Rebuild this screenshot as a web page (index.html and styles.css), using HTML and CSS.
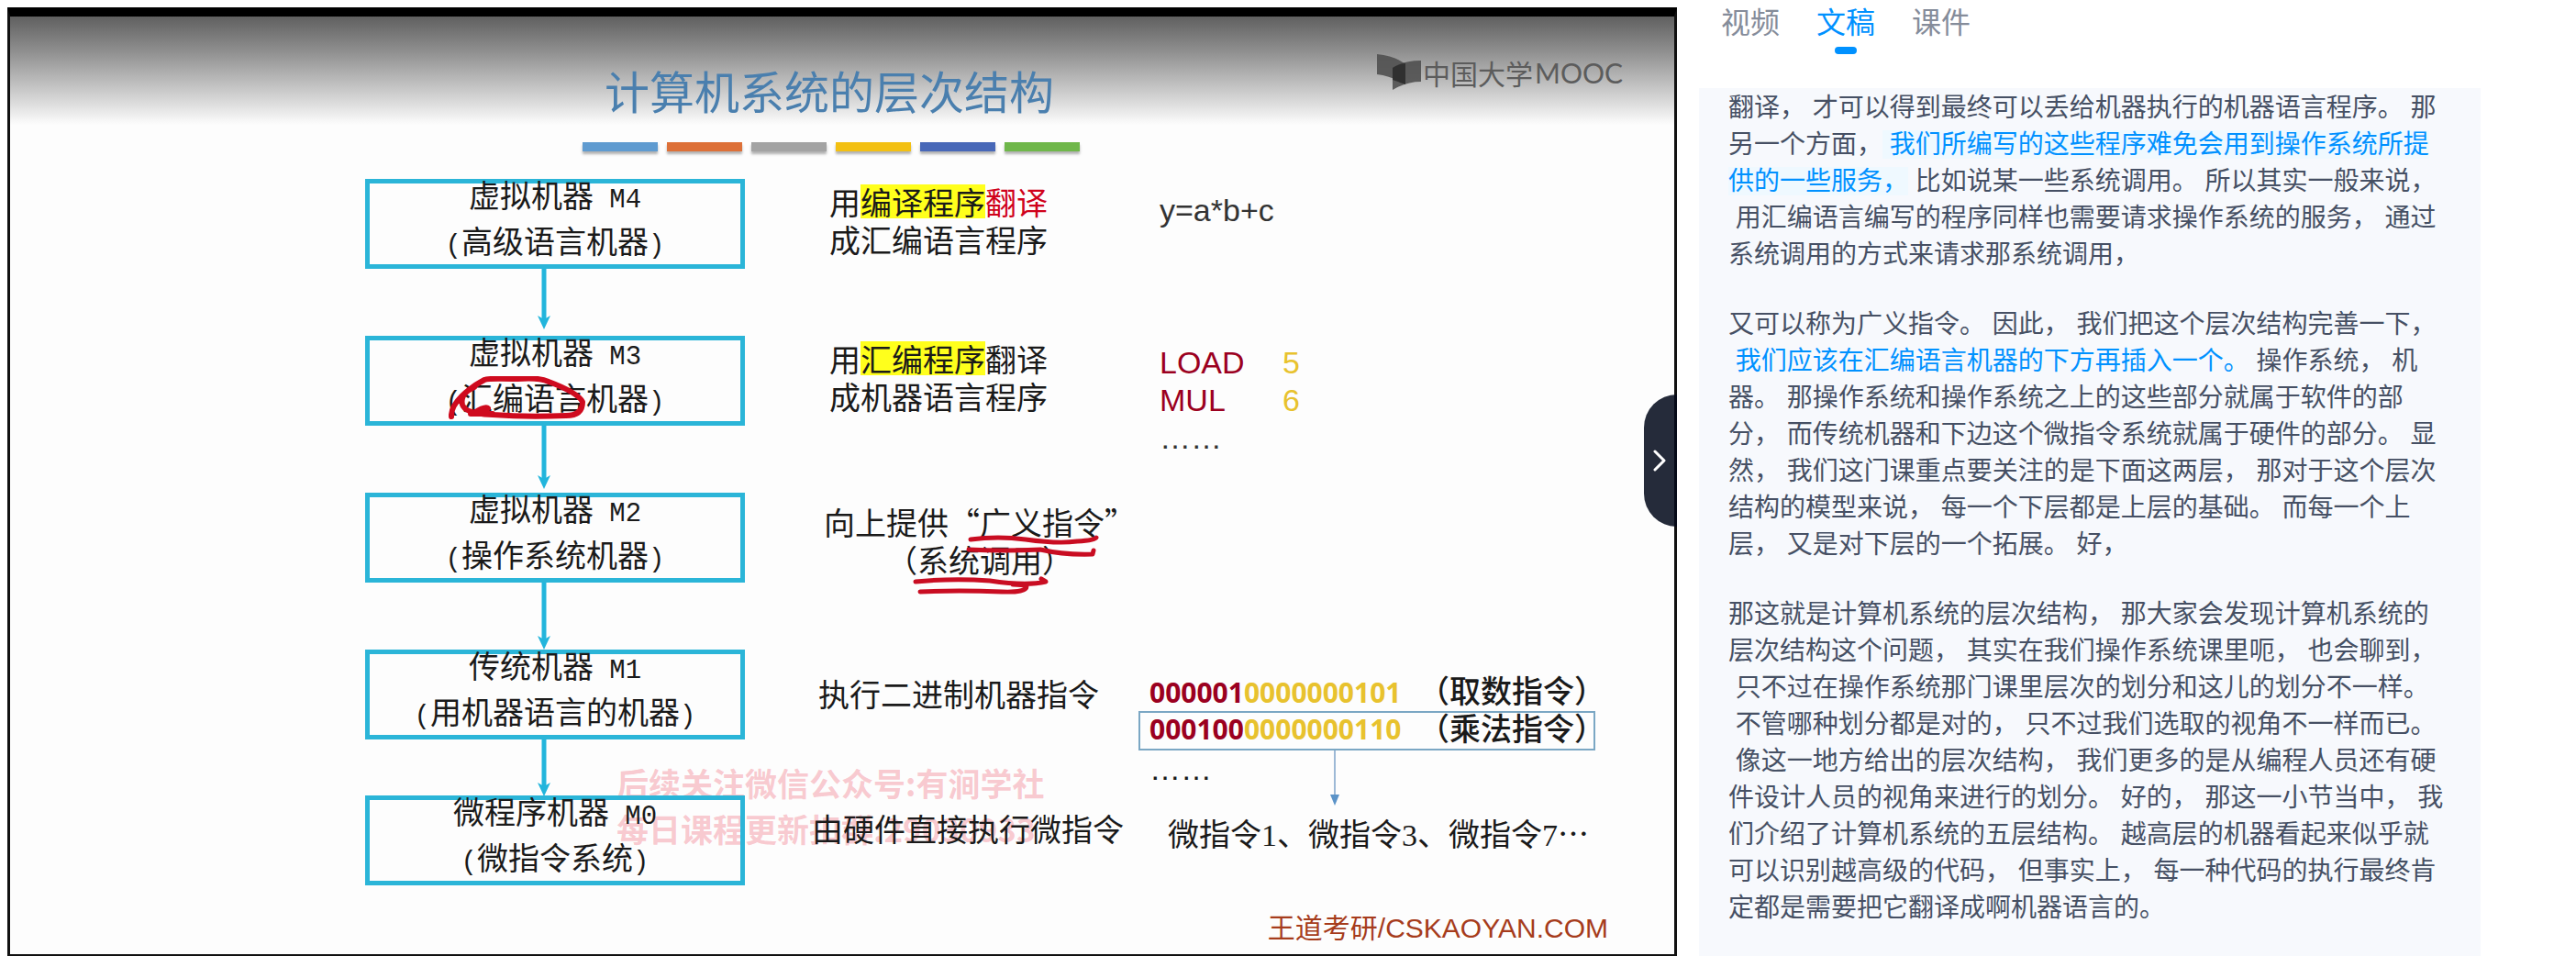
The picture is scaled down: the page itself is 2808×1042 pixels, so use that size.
FILE: index.html
```html
<!DOCTYPE html>
<html lang="zh-CN">
<head>
<meta charset="utf-8">
<title>计算机系统的层次结构</title>
<link rel="stylesheet" href="styles.css">
</head>
<body>
<div class="page">
  <main class="player">
    <div class="slide">
      <header class="slide-head">
        <h1 class="slide-title">计算机系统的层次结构</h1>
        <div class="brand">
          <svg class="brand-icon" viewBox="0 0 48 40" aria-hidden="true">
            <path d="M0 0Q20 2 31 11V33Q16 24 0 22Z" fill="#505050" opacity=".9"/>
            <path d="M17 39V15Q28 7 48 7V30Q32 30 17 39Z" fill="#4a4a4a" opacity=".85"/>
            <path d="M17 15Q24 10 31 10V33L17 28Z" fill="#303030"/>
          </svg>
          <span class="brand-name">中国大学</span><span class="brand-mooc">MOOC</span>
        </div>
        <div class="bars">
          <i class="bar blue"></i><i class="bar orange"></i><i class="bar gray"></i><i class="bar yellow"></i><i class="bar indigo"></i><i class="bar green"></i>
        </div>
      </header>

      <section class="levels">
        <div class="level">
          <div class="stack">
            <div class="box"><div class="label">虚拟机器<span class="mono"> M4</span><br><span class="mono">(</span>高级语言机器<span class="mono">)</span></div></div>
            <svg class="arrow" width="16" height="66" viewBox="0 0 16 66"><path d="M8 0V56" stroke="#22b5dc" stroke-width="5"/><path d="M1 51L8 55L15 51L8 66Z" fill="#22b5dc"/></svg>
          </div>
          <p class="note inset">用<mark>编译程序</mark><span class="red">翻译</span><br>成汇编语言程序</p>
          <p class="code single">y=a*b+c</p>
        </div>

        <div class="level">
          <div class="stack">
            <div class="box"><div class="label">虚拟机器<span class="mono"> M3</span><br><span class="mono">(</span>汇编语言机器<span class="mono">)</span></div>
              <svg class="ring" viewBox="0 0 150 50" aria-hidden="true"><path d="M3 44C2 29 22 13 39 4Q43 2 75 3Q98 1 109 6Q141 18 146 28Q146 43 128 43Q85 45 48 42Q18 41 15 31Q12 19 28 12M24 41L48 41M28 40Q40 32 43 35L38 41" fill="none" stroke="#cf0a1e" stroke-width="6" stroke-linecap="round" stroke-linejoin="round"/></svg>
            </div>
            <svg class="arrow" width="16" height="69" viewBox="0 0 16 69"><path d="M8 0V59" stroke="#22b5dc" stroke-width="5"/><path d="M1 54L8 58L15 54L8 69Z" fill="#22b5dc"/></svg>
          </div>
          <p class="note inset">用<mark>汇编程序</mark>翻译<br>成机器语言程序</p>
          <div class="code">
            <div class="instr"><span class="op">LOAD</span><span class="addr">5</span></div>
            <div class="instr"><span class="op">MUL</span><span class="addr">6</span></div>
            <div>……</div>
          </div>
        </div>

        <div class="level">
          <div class="stack">
            <div class="box"><div class="label">虚拟机器<span class="mono"> M2</span><br><span class="mono">(</span>操作系统机器<span class="mono">)</span></div></div>
            <svg class="arrow" width="16" height="73" viewBox="0 0 16 73"><path d="M8 0V64" stroke="#22b5dc" stroke-width="5"/><path d="M1 58L8 62L15 58L8 73Z" fill="#22b5dc"/></svg>
          </div>
          <p class="note upward">向上提供“广义指令”<br><span class="call">（系统调用）</span>
            <svg class="strokes" viewBox="0 0 210 66" aria-hidden="true"><path d="M64 5Q94 1 124 5Q160 10 180 7Q200 6 201 3M62 16Q100 18 140 16Q166 22 197 21L198 17" fill="none" stroke="#c90d22" stroke-width="5" stroke-linecap="round" stroke-linejoin="round"/><path d="M4 51Q45 47 85 50Q125 56 146 51L141 48M9 62Q50 60 98 62Q125 63 125 56Q121 54 110 54" fill="none" stroke="#c90d22" stroke-width="5" stroke-linecap="round" stroke-linejoin="round"/></svg>
          </p>
        </div>

        <div class="level">
          <div class="stack">
            <div class="box"><div class="label">传统机器<span class="mono"> M1</span><br><span class="mono">(</span>用机器语言的机器<span class="mono">)</span></div></div>
            <svg class="arrow" width="16" height="62" viewBox="0 0 16 62"><path d="M8 0V52" stroke="#22b5dc" stroke-width="5"/><path d="M1 47L8 51L15 47L8 62Z" fill="#22b5dc"/></svg>
          </div>
          <p class="note machine">执行二进制机器指令</p>
          <div class="binary">
            <div class="word"><span class="bits"><b class="op">000001</b><b class="addr">0000000101</b></span><strong>（取数指令）</strong></div>
            <div class="word framed"><span class="bits"><b class="op">000100</b><b class="addr">0000000110</b></span><strong>（乘法指令）</strong>
              <svg class="thin-arrow" viewBox="0 0 12 60" aria-hidden="true"><path d="M6 0V50" stroke="#9db9d6" stroke-width="2"/><path d="M1 48H11L6 60Z" fill="#5b93c8"/></svg>
            </div>
            <div class="dots">……</div>
          </div>
        </div>

        <div class="level last">
          <div class="watermark">后续关注微信公众号:有涧学社<br>每日课程更新扣群:29030933</div>
          <div class="stack">
            <div class="box"><div class="label">微程序机器<span class="mono"> M0</span><br><span class="mono">(</span>微指令系统<span class="mono">)</span></div></div>
          </div>
          <p class="note hardware">由硬件直接执行微指令</p>
          <p class="micro">微指令<span class="num">1</span>、微指令<span class="num">3</span>、微指令<span class="num">7</span>…</p>
        </div>
      </section>

      <footer class="credit">王道考研/CSKAOYAN.COM</footer>
    </div>
    <button class="handle" type="button" aria-label="收起"><svg viewBox="0 0 14 24" aria-hidden="true"><path d="M2 2L12 12L2 22" fill="none" stroke="#fff" stroke-width="3" stroke-linecap="round" stroke-linejoin="round"/></svg></button>
  </main>

  <aside class="side">
    <nav class="tabs">
      <a class="tab" href="#video">视频</a>
      <a class="tab active" href="#script">文稿</a>
      <a class="tab" href="#slides">课件</a>
    </nav>
    <article class="transcript" id="script">
<p>翻译， 才可以得到最终可以丢给机器执行的机器语言程序。 那
另一个方面，<span class="now"> 我们所编写的这些程序难免会用到操作系统所提
供的一些服务，</span> 比如说某一些系统调用。 所以其实一般来说，
 用汇编语言编写的程序同样也需要请求操作系统的服务， 通过
系统调用的方式来请求那系统调用，</p>
<p>又可以称为广义指令。 因此， 我们把这个层次结构完善一下，
<span class="picked"> 我们应该在汇编语言机器的下方再插入一个。</span> 操作系统， 机
器。 那操作系统和操作系统之上的这些部分就属于软件的部
分， 而传统机器和下边这个微指令系统就属于硬件的部分。 显
然， 我们这门课重点要关注的是下面这两层， 那对于这个层次
结构的模型来说， 每一个下层都是上层的基础。 而每一个上
层， 又是对下层的一个拓展。 好，</p>
<p>那这就是计算机系统的层次结构， 那大家会发现计算机系统的
层次结构这个问题， 其实在我们操作系统课里呃， 也会聊到，
 只不过在操作系统那门课里层次的划分和这儿的划分不一样。
 不管哪种划分都是对的， 只不过我们选取的视角不一样而已。
 像这一地方给出的层次结构， 我们更多的是从编程人员还有硬
件设计人员的视角来进行的划分。 好的， 那这一小节当中， 我
们介绍了计算机系统的五层结构。 越高层的机器看起来似乎就
可以识别越高级的代码， 但事实上， 每一种代码的执行最终肯
定都是需要把它翻译成啊机器语言的。</p>
    </article>
  </aside>
</div>
</body>
</html>
```
FILE: styles.css
```css
* {
  box-sizing: border-box;
}

body {
  margin: 0;
  background: #fff;
  font-family: "Liberation Sans", "Noto Sans CJK SC", sans-serif;
}

p,
h1 {
  margin: 0;
}

.page {
  display: grid;
  grid-template-columns: 1820fr 956fr;
  gap: 24px;
  min-height: 100vh;
  padding-left: 8px;
}

/* Video frame */
.player {
  position: relative;
  margin-top: 8px;
  background: #fdfdfd;
  border: 3px solid #111;
  border-top: 10px solid #000;
  border-bottom-width: 2px;
}

.slide {
  display: flex;
  flex-direction: column;
  min-height: 100%;
  background: linear-gradient(#606060 0, #8f8f8f 38px, #b4b4b4 65px, #dedede 96px, #fdfdfd 118px);
  font-family: "Noto Sans CJK SC", sans-serif;
  color: #1a1a1a;
}

.slide-head {
  position: relative;
  padding: 52px 28px 0 0;
}

.slide-title {
  font-size: 49px;
  line-height: 56px;
  font-weight: 400;
  text-align: center;
  color: #4a7fae;
}

.brand {
  position: absolute;
  top: 41px;
  right: 56px;
  display: flex;
  align-items: center;
  gap: 2px;
  height: 40px;
  color: #5c5c5c;
}

.brand-icon {
  width: 48px;
  height: 40px;
}

.brand-name {
  font-size: 30px;
  line-height: 38px;
}

.brand-mooc {
  font-family: Lato, sans-serif;
  font-size: 30px;
  line-height: 38px;
}

.bars {
  display: flex;
  justify-content: center;
  gap: 10px;
  padding: 29px 0 0 4px;
}

.bar {
  width: 82px;
  height: 10px;
  box-shadow: 0 3px 3px rgba(0, 0, 0, 0.3);
}

.blue { background: #5f9bd0; }
.orange { background: #dd7038; }
.gray { background: #a3a3a3; }
.yellow { background: #f3c012; }
.indigo { background: #4868b8; }
.green { background: #6fb74a; }

/* Machine levels */
.levels {
  padding: 30px 0 0 387px;
  font-size: 34px;
  line-height: 41px;
}

.level {
  position: relative;
  display: grid;
  grid-template-columns: 414px 277px 1fr;
  column-gap: 76px;
  height: 171px;
}

.level:nth-child(4) {
  height: 159px;
}

.level.last {
  height: 98px;
}

.stack {
  display: flex;
  flex-direction: column;
}

.box {
  position: relative;
  height: 98px;
  border: 5px solid #2bb5d8;
  text-align: center;
  white-space: nowrap;
}

.label {
  margin-top: -13px;
  line-height: 50px;
}

.mono {
  font-family: "Liberation Mono", monospace;
  font-size: 29px;
  line-height: 1;
  white-space: pre;
}

.num {
  font-family: "Liberation Serif", serif;
  line-height: 1;
}

.arrow {
  margin-left: 187px;
  flex: none;
}

.note,
.micro {
  position: relative;
  white-space: nowrap;
}

.inset {
  padding: 4px 0 0 16px;
}

.upward {
  padding: 11px 0 0 10px;
}

.machine {
  padding: 27px 0 0 4px;
}

.hardware {
  padding-top: 15px;
  margin-left: -3px;
}

.call {
  padding-left: 68px;
}

mark {
  background: linear-gradient(#ffff1c, #ffff1c) center / 100% 37px no-repeat;
  color: inherit;
}

.red {
  color: #d0021b;
}

.ring {
  position: absolute;
  left: 86px;
  top: 39px;
  width: 150px;
  height: 50px;
}

.strokes {
  position: absolute;
  left: 106px;
  top: 46px;
  width: 210px;
  height: 66px;
}

.code {
  padding: 9px 0 0 23px;
  font-family: "Liberation Sans", "Noto Sans CJK SC", sans-serif;
  color: #333;
}

.single {
  padding-top: 14px;
}

.instr {
  display: flex;
}

.instr .op {
  width: 134px;
}

.op {
  color: #9b0020;
}

.addr {
  color: #e8c22e;
}

.binary {
  padding-top: 26px;
  font-family: "Liberation Sans", "Noto Sans CJK SC", sans-serif;
}

.word {
  position: relative;
  display: flex;
  width: 498px;
  padding: 0 12px;
  white-space: nowrap;
}

.framed {
  height: 43px;
  padding: 0 10px;
  border: 2px solid #7ba7c4;
  line-height: 36px;
}

.bits {
  flex: none;
  width: 293px;
  font-family: "Open Sans", sans-serif;
  font-size: 30px;
}

.word strong {
  font-weight: 500;
}

.dots {
  padding-left: 12px;
}

.thin-arrow {
  position: absolute;
  left: 206px;
  top: 41px;
  width: 12px;
  height: 60px;
}

.micro {
  padding: 20px 0 0 32px;
}

.watermark {
  position: absolute;
  left: 274px;
  top: -39px;
  font-size: 35px;
  line-height: 50px;
  font-weight: 700;
  white-space: nowrap;
  color: rgba(240, 90, 110, 0.33);
}

.credit {
  padding: 27px 72px 8px 0;
  font-family: "Liberation Sans", "Noto Sans CJK SC", sans-serif;
  font-size: 30px;
  line-height: 40px;
  text-align: right;
  color: #a63c1c;
}

.handle {
  position: absolute;
  right: -3px;
  top: 412px;
  display: flex;
  align-items: center;
  justify-content: center;
  width: 36px;
  height: 144px;
  padding: 0;
  border: 0;
  border-right: 3px solid #060a18;
  border-radius: 36px 0 0 36px;
  background: #252b3a;
}

.handle svg {
  width: 14px;
  height: 24px;
}

/* Transcript */
.side {
  display: flex;
  flex-direction: column;
  padding-right: 104px;
}

.tabs {
  display: flex;
  gap: 40px;
  height: 96px;
  padding: 1px 0 0 24px;
}

.tab {
  display: flex;
  flex-direction: column;
  align-items: center;
  gap: 2px;
  font-size: 32px;
  line-height: 48px;
  color: #858c9a;
  text-decoration: none;
}

.tab.active {
  color: #0091ff;
}

.tab.active::after {
  content: "";
  width: 24px;
  height: 8px;
  border-radius: 4px;
  background: #0091ff;
}

.transcript {
  flex: 1;
  padding: 2px 32px 0;
  background: #f7f9fd;
  color: #465064;
  font-size: 28px;
  line-height: 40px;
}

.transcript p {
  white-space: pre-wrap;
}

.transcript p + p {
  margin-top: 36px;
}

.now {
  color: #0091ff;
  background: #eff9ff;
}

.picked {
  color: #0091ff;
}
```
